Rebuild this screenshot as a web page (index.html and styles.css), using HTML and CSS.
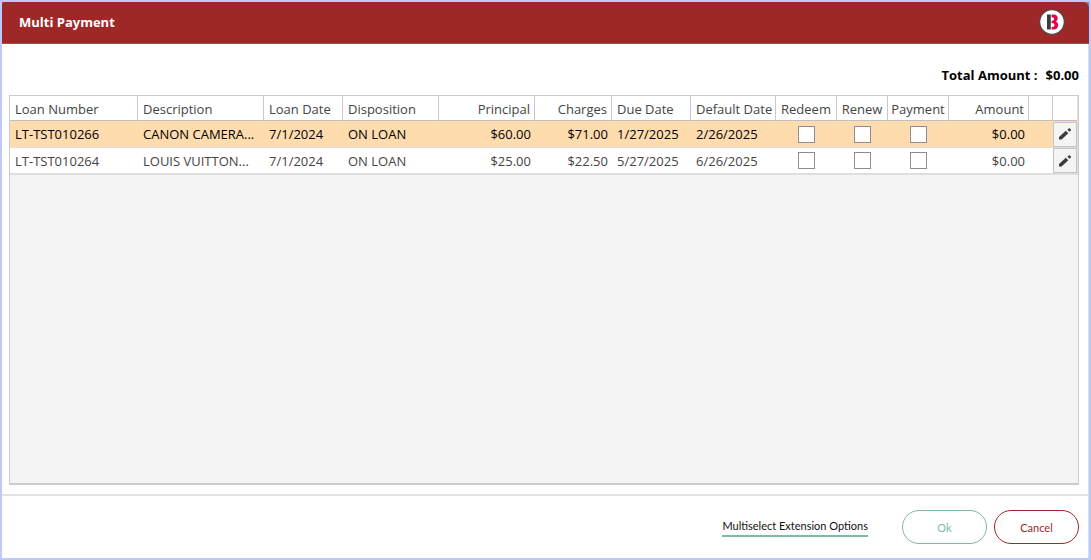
FILE: index.html
```html
<!doctype html>
<html lang="en">
    <head>
        <meta charset="UTF-8" />
        <meta name="viewport" content="width=device-width, initial-scale=1.0" />
        <title>Multi Payment</title>
        <link rel="stylesheet" href="styles.css">
    </head>
    <body>
        <div class="window">
            <header class="titlebar">
                <h1>Multi Payment</h1>
                <svg class="logo" viewBox="0 0 26 26" aria-hidden="true">
                    <circle cx="13" cy="13" r="12.3" fill="#fff" stroke="#4a4a4a" stroke-width="1.2" />
                    <path d="M8 5.500h3.800v15H8z" fill="#3c3c3c" />
                    <path fill="#e4004f" d="M12.600 5.500h1.800c2.900 0 4.300 1.400 4.300 3.700 0 1.700-.8 2.800-2.100 3.400 1.600.5 2.500 1.800 2.500 3.600 0 2.700-1.800 4.300-4.700 4.300h-1.800v-2.500h1c1.200 0 1.900-.7 1.900-1.900s-.7-1.800-1.900-1.800h-1v-2.500h.9c1 0 1.600-.6 1.600-1.700s-.5-1.700-1.500-1.700h-1z" />
                </svg>
            </header>

            <main class="content">
                <p class="total"><span>Total Amount :</span><span>$0.00</span></p>

                <div class="grid">
                    <table>
                        <colgroup>
                            <col class="col-loan"><col><col class="col-date"><col class="col-wide">
                            <col class="col-wide"><col class="col-charges"><col class="col-date"><col class="col-default">
                            <col class="col-check"><col class="col-renew"><col class="col-check"><col class="col-amount">
                            <col class="col-blank"><col class="col-edit">
                        </colgroup>
                        <thead>
                            <tr>
                                <th>Loan Number</th>
                                <th>Description</th>
                                <th>Loan Date</th>
                                <th>Disposition</th>
                                <th class="num">Principal</th>
                                <th class="num">Charges</th>
                                <th>Due Date</th>
                                <th>Default Date</th>
                                <th class="check">Redeem</th>
                                <th class="check">Renew</th>
                                <th class="check">Payment</th>
                                <th class="num">Amount</th>
                                <th></th>
                                <th></th>
                            </tr>
                        </thead>
                        <tbody>
                            <tr class="selected">
                                <td>LT-TST010266</td>
                                <td>CANON CAMERA...</td>
                                <td>7/1/2024</td>
                                <td>ON LOAN</td>
                                <td class="num">$60.00</td>
                                <td class="num">$71.00</td>
                                <td>1/27/2025</td>
                                <td>2/26/2025</td>
                                <td class="check"><input type="checkbox" aria-label="Redeem LT-TST010266"></td>
                                <td class="check"><input type="checkbox" aria-label="Renew LT-TST010266"></td>
                                <td class="check"><input type="checkbox" aria-label="Payment LT-TST010266"></td>
                                <td class="num">$0.00</td>
                                <td></td>
                                <td class="edit">
                                    <button type="button" aria-label="Edit LT-TST010266">
                                        <svg viewBox="0 0 14 14"><path d="M1 12.500v-2.600L7.800 3.700l2.500 2.500L3.600 12.500zM9.400 2.800l1.900-1.900 2 2-1.900 1.900z" /></svg>
                                    </button>
                                </td>
                            </tr>
                            <tr>
                                <td>LT-TST010264</td>
                                <td>LOUIS VUITTON...</td>
                                <td>7/1/2024</td>
                                <td>ON LOAN</td>
                                <td class="num">$25.00</td>
                                <td class="num">$22.50</td>
                                <td>5/27/2025</td>
                                <td>6/26/2025</td>
                                <td class="check"><input type="checkbox" aria-label="Redeem LT-TST010264"></td>
                                <td class="check"><input type="checkbox" aria-label="Renew LT-TST010264"></td>
                                <td class="check"><input type="checkbox" aria-label="Payment LT-TST010264"></td>
                                <td class="num">$0.00</td>
                                <td></td>
                                <td class="edit">
                                    <button type="button" aria-label="Edit LT-TST010264">
                                        <svg viewBox="0 0 14 14"><path d="M1 12.500v-2.600L7.800 3.700l2.500 2.500L3.600 12.500zM9.400 2.800l1.900-1.900 2 2-1.900 1.900z" /></svg>
                                    </button>
                                </td>
                            </tr>
                        </tbody>
                    </table>
                </div>
            </main>

            <footer class="actions">
                <a class="options" href="#">Multiselect Extension Options</a>
                <button type="button" class="btn btn-ok">Ok</button>
                <button type="button" class="btn btn-cancel">Cancel</button>
            </footer>
        </div>
    </body>
</html>
```
FILE: styles.css
```css
* {
    box-sizing: border-box;
}
body {
    margin: 0;
    font-family: "Open Sans", "Noto Sans", sans-serif;
    font-size: 13px;
    color: #444;
    background-color: #7f868c;
}
.window {
    display: flex;
    flex-direction: column;
    height: 100vh;
    border: 2px solid #bdc8ff;
}
.titlebar {
    display: flex;
    justify-content: space-between;
    align-items: center;
    height: 42px;
    padding: 0 24px 1px 17px;
    background-color: #9e2828;
    border-bottom: 1px solid #b04848;
    border-radius: 2px 6px 0 0;
}
.titlebar h1 {
    margin: 0;
    font-size: 13px;
    font-weight: bold;
    color: #fff;
}
.logo {
    width: 26px;
    height: 26px;
}

/* Loan list */
.content {
    flex: 1;
    display: flex;
    flex-direction: column;
    min-height: 0;
    padding: 0 9px 9px 7px;
    background-color: #fff;
    border-right: 1px solid #ddd;
}
.total {
    display: flex;
    justify-content: flex-end;
    gap: 8px;
    margin: 0;
    padding: 22px 0 11px;
    line-height: 18px;
    font-weight: bold;
    color: #000;
}
.grid {
    flex: 1;
    overflow: hidden;
    background-color: #f3f3f3;
    border: 1px solid #ccc;
    border-bottom-width: 2px;
}
table {
    width: 100%;
    table-layout: fixed;
    border-collapse: separate;
    border-spacing: 0;
    background-color: #fff;
    border-right: 1px solid #dedede;
    border-bottom: 2px solid #dedede;
}
.col-loan { width: 128px; }
.col-date { width: 79px; }
.col-wide { width: 96px; }
.col-charges { width: 77px; }
.col-default { width: 85px; }
.col-check { width: 61px; }
.col-renew { width: 51px; }
.col-amount { width: 80px; }
.col-blank,
.col-edit { width: 24px; }
th, td {
    padding: 0 4px 0 5px;
    text-align: left;
    font-weight: normal;
    white-space: nowrap;
}
th {
    height: 25px;
    padding-top: 2px;
    line-height: 18px;
    border-right: 1px solid #c8c8c8;
    border-bottom: 1px solid #c0c0c0;
}
th:last-child {
    border-right: none;
}
td {
    height: 25px;
}
.selected td {
    height: 27px;
    color: #000;
    background-color: #ffdcae;
    border-bottom: 1px solid #e2ddd8;
}
.num {
    text-align: right;
}
.check {
    padding-left: 0;
    padding-right: 0;
    text-align: center;
}
.check input {
    appearance: none;
    display: block;
    width: 17px;
    height: 17px;
    margin: 0 auto;
    background-color: #fff;
    border: 1px solid #8c8c8c;
}
.check input:checked {
    background-color: #7db9ac;
}
.edit {
    padding: 0;
}
.edit button {
    display: flex;
    justify-content: center;
    align-items: center;
    width: 100%;
    height: 25px;
    padding: 0;
    background-color: #f4f4f4;
    border: 1px solid #c4c4c4;
}
.edit svg {
    width: 14px;
    height: 14px;
    fill: #3c3c3c;
}

/* Bottom buttons */
.actions {
    display: flex;
    justify-content: flex-end;
    align-items: center;
    height: 64px;
    padding-right: 9px;
    background-color: #fff;
    border-top: 2px solid #e2e2e2;
    border-right: 1px solid #ddd;
    font-family: Lato, "Open Sans", sans-serif;
    font-size: 11px;
}
.options {
    margin-right: 34px;
    border-bottom: 2px solid #7db9ac;
    line-height: 18px;
    color: #111;
    text-decoration: none;
}
.btn {
    width: 85px;
    height: 34px;
    padding: 1px 0 0;
    background-color: #fff;
    border: 1px solid;
    border-radius: 17px;
    font: inherit;
}
.btn-ok {
    margin-right: 7px;
    color: #7db9ac;
}
.btn-cancel {
    color: #9e2828;
}
```
